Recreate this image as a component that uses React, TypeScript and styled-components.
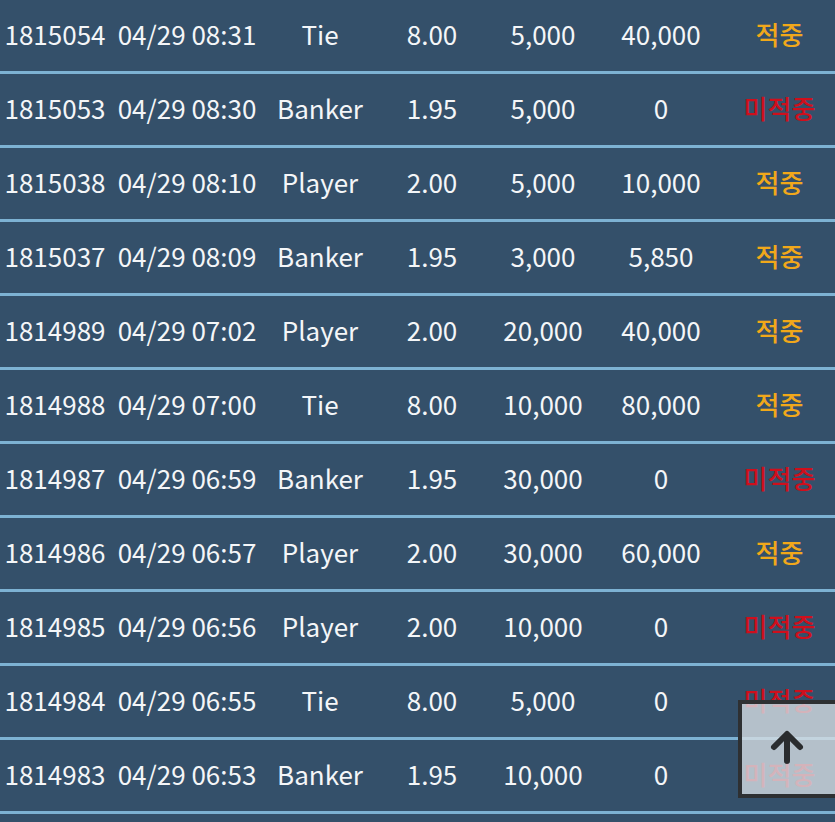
import React from "react";
import styled, { createGlobalStyle } from "styled-components";

const Global = createGlobalStyle`
  html, body { margin: 0; padding: 0; background: #34506a; overflow: hidden; }
  body { font-family: "Noto Sans CJK KR", "Noto Sans", sans-serif; }
`;

const Page = styled.div`
  width: 835px;
  height: 822px;
  background: #34506a;
  overflow: hidden;
  position: relative;
`;

const Table = styled.div`
  margin-top: -3px;
  border-top: 3px solid #7db2d3;
`;

const Row = styled.div`
  display: grid;
  grid-template-columns: 110px 154px 112px 112px 110px 126px 111px;
  height: 71px;
  align-items: center;
  border-bottom: 3px solid #7db2d3;
`;

const Cell = styled.div<{ $tone?: "win" | "lose" }>`
  text-align: center;
  font-size: 26px;
  line-height: 1;
  padding-bottom: 4px;
  color: ${(p) => (p.$tone === "win" ? "#f1a81a" : p.$tone === "lose" ? "#cf0f1c" : "#f4f6f8")};
  font-weight: ${(p) => (p.$tone ? 500 : 400)};
  white-space: nowrap;
`;

const TopButton = styled.button`
  position: absolute;
  left: 738px;
  top: 700px;
  width: 100px;
  height: 98px;
  box-sizing: border-box;
  border: 4px solid #2e3032;
  border-right: none;
  background: rgba(212, 220, 226, 0.8);
  display: flex;
  align-items: center;
  justify-content: center;
  padding: 0;
  cursor: pointer;
`;

type R = [string, string, string, string, string, string, boolean];

const rows: R[] = [
  ["1815054", "04/29 08:31", "Tie", "8.00", "5,000", "40,000", true],
  ["1815053", "04/29 08:30", "Banker", "1.95", "5,000", "0", false],
  ["1815038", "04/29 08:10", "Player", "2.00", "5,000", "10,000", true],
  ["1815037", "04/29 08:09", "Banker", "1.95", "3,000", "5,850", true],
  ["1814989", "04/29 07:02", "Player", "2.00", "20,000", "40,000", true],
  ["1814988", "04/29 07:00", "Tie", "8.00", "10,000", "80,000", true],
  ["1814987", "04/29 06:59", "Banker", "1.95", "30,000", "0", false],
  ["1814986", "04/29 06:57", "Player", "2.00", "30,000", "60,000", true],
  ["1814985", "04/29 06:56", "Player", "2.00", "10,000", "0", false],
  ["1814984", "04/29 06:55", "Tie", "8.00", "5,000", "0", false],
  ["1814983", "04/29 06:53", "Banker", "1.95", "10,000", "0", false],
];

export default function App() {
  return (
    <Page>
      <Global />
      <Table>
        {rows.map((r) => (
          <Row key={r[0]}>
            <Cell>{r[0]}</Cell>
            <Cell>{r[1]}</Cell>
            <Cell>{r[2]}</Cell>
            <Cell>{r[3]}</Cell>
            <Cell>{r[4]}</Cell>
            <Cell>{r[5]}</Cell>
            <Cell $tone={r[6] ? "win" : "lose"}>{r[6] ? "적중" : "미적중"}</Cell>
          </Row>
        ))}
      </Table>
      <TopButton aria-label="top">
        <svg width="40" height="40" viewBox="0 0 40 40" style={{ marginLeft: -6, marginTop: -4 }}>
          <path
            d="M20 34 V8 M7 20 L20 7 L33 20"
            fill="none"
            stroke="#2a2c2e"
            strokeWidth="6"
            strokeLinecap="round"
            strokeLinejoin="round"
          />
        </svg>
      </TopButton>
    </Page>
  );
}
